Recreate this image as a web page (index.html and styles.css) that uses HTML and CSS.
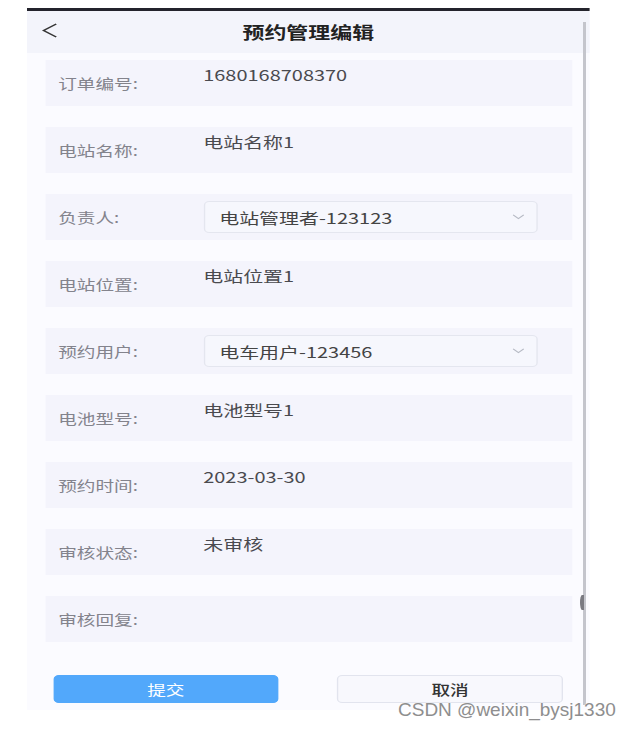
FILE: index.html
```html
<!DOCTYPE html>
<html lang="zh-CN">
<head>
    <meta charset="UTF-8">
    <meta name="viewport" content="width=device-width, initial-scale=1.0">
    <title>预约管理编辑</title>
    <link rel="stylesheet" href="styles.css">
</head>
<body>
    <div class="screen">
        <div class="topbar">
            <span class="back">
                <svg width="12" height="15" viewBox="0 0 12 15"><polyline points="11,1 1.5,7.5 11,14" fill="none" stroke="#333" stroke-width="1.4"/></svg>
            </span>
            <h1 class="title">预约管理编辑</h1>
            <span></span>
        </div>

        <form class="form">
            <div class="row">
                <span class="label">订单编号:</span>
                <span class="value">1680168708370</span>
            </div>
            <div class="row">
                <span class="label">电站名称:</span>
                <span class="value">电站名称1</span>
            </div>
            <div class="row">
                <span class="label">负责人:</span>
                <div class="select">
                    <span>电站管理者-123123</span>
                    <svg width="9" height="6" viewBox="0 0 9 6"><polyline points="0.5,0.8 4.5,4.6 8.5,0.8" fill="none" stroke="#b6bac4" stroke-width="1"/></svg>
                </div>
            </div>
            <div class="row">
                <span class="label">电站位置:</span>
                <span class="value">电站位置1</span>
            </div>
            <div class="row">
                <span class="label">预约用户:</span>
                <div class="select">
                    <span>电车用户-123456</span>
                    <svg width="9" height="6" viewBox="0 0 9 6"><polyline points="0.5,0.8 4.5,4.6 8.5,0.8" fill="none" stroke="#b6bac4" stroke-width="1"/></svg>
                </div>
            </div>
            <div class="row">
                <span class="label">电池型号:</span>
                <span class="value">电池型号1</span>
            </div>
            <div class="row">
                <span class="label">预约时间:</span>
                <span class="value">2023-03-30</span>
            </div>
            <div class="row">
                <span class="label">审核状态:</span>
                <span class="value">未审核</span>
            </div>
            <div class="row">
                <span class="label">审核回复:</span>
                <span class="value"></span>
            </div>

            <div class="actions">
                <button type="button" class="btn btn-primary">提交</button>
                <button type="button" class="btn">取消</button>
            </div>
        </form>
    </div>

    <div class="scrollbar"><span class="thumb"></span></div>
    <div class="watermark">CSDN @weixin_bysj1330</div>
</body>
</html>
```

FILE: styles.css
```css
* {
    margin: 0;
    padding: 0;
    box-sizing: border-box;
    font-family: 'Noto Sans CJK SC', 'Noto Sans', sans-serif;
}

body {
    background: #fff;
    width: 630px;
    height: 730px;
    position: relative;
    overflow: hidden;
}

/* the phone capture is stretched wider than tall */
.screen {
    width: 423px;
    height: 702px;
    margin: 8px 0 0 27px;
    transform: scaleX(1.33);
    transform-origin: 0 0;
    background: #fbfbff;
    border-top: 3px solid #23232c;
}

.topbar {
    height: 42px;
    background: #f3f4fb;
    display: grid;
    grid-template-columns: 1fr auto 1fr;
    align-items: center;
}

.back {
    padding-left: 11px;
    display: flex;
    margin-top: -3px;
}

.title {
    font-size: 16.5px;
    font-weight: bold;
    color: #222;
}

.form {
    padding: 7px 13.5px 0;
    display: flex;
    flex-direction: column;
    gap: 21px;
}

.row {
    height: 46px;
    background: #f4f4fc;
    display: flex;
    align-items: center;
    padding-left: 10px;
}

.label {
    flex: 0 0 109px;
    font-size: 14px;
    color: #83838c;
}

.value {
    align-self: flex-start;
    padding-top: 5px;
    font-size: 15px;
    line-height: 20px;
    color: #4a4a4f;
}

.select {
    width: 251px;
    height: 32px;
    background: #f6f7fd;
    border: 1px solid #e4e6ef;
    border-radius: 4px;
    display: flex;
    align-items: center;
    justify-content: space-between;
    padding: 0 9px 0 11px;
    font-size: 15px;
    color: #444;
}

.actions {
    display: flex;
    gap: 44px;
    padding: 0 6.5px 0 6px;
    margin-top: 12px;
}

.btn {
    flex: 1;
    height: 28px;
    border-radius: 4px;
    border: 1px solid #e2e4ee;
    background: #f8f8fd;
    font-size: 14px;
    font-weight: 500;
    color: #333;
}

.btn-primary {
    background: #52a8fb;
    border-color: #52a8fb;
    color: #fff;
    font-weight: normal;
}

.scrollbar {
    position: absolute;
    left: 583px;
    top: 22px;
    width: 3px;
    height: 683px;
    background: #c4c5cc;
}

.thumb {
    position: absolute;
    left: -3px;
    top: 573px;
    width: 4px;
    height: 15px;
    border-radius: 50% 0 0 50%;
    background: #7b7b82;
}

.watermark {
    position: absolute;
    left: 398px;
    top: 699px;
    font-family: 'Liberation Sans', Arial, sans-serif;
    font-size: 19px;
    color: #8e8e8e;
    text-shadow: 0 0 2px #fff;
}
```
